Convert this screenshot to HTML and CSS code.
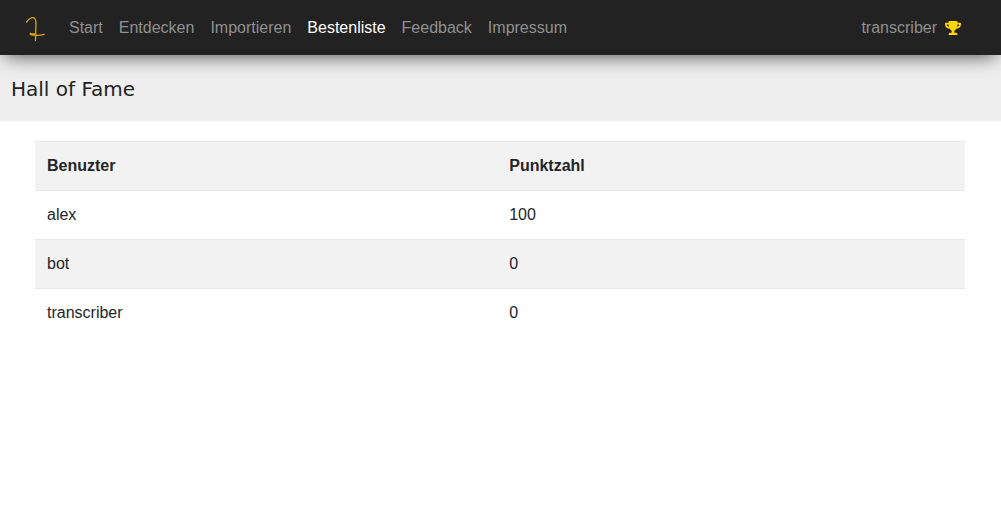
FILE: index.html
```html
<!DOCTYPE html>
<html lang="de">
<head>
<meta charset="utf-8">
<meta name="viewport" content="width=device-width, initial-scale=1">
<title>Hall of Fame</title>
<link rel="stylesheet" href="styles.css">
</head>
<body>
<nav class="navbar">
  <a class="brand" href="#" aria-label="Startseite">
    <svg class="logo" viewBox="0 0 30 30" fill="none" stroke="#d9a30f" stroke-linecap="round" stroke-linejoin="round">
      <path stroke-width="1.3" d="M6.6 9C8.5 6.400 11 4.600 13.200 4.700C15.800 5 16.100 8.500 15.900 12L15.500 27.500"/>
      <path stroke-width="1.300" d="M15.300 22.600L10.200 20.400C9.800 21.800 12 22.200 16 22.300C19 22.400 22 22 24.200 21.400"/>
      <path stroke-width="1.300" d="M10.400 20.800L15.200 21"/>
    </svg>
  </a>
  <div class="links">
    <a class="link" href="#">Start</a>
    <a class="link" href="#">Entdecken</a>
    <a class="link" href="#">Importieren</a>
    <a class="link active" href="#" aria-current="page">Bestenliste</a>
    <a class="link" href="#">Feedback</a>
    <a class="link" href="#">Impressum</a>
  </div>
  <div class="user">
    <a class="link" href="#">transcriber</a>
    <a class="award" href="#" aria-label="Bestenliste">
      <svg class="trophy" viewBox="0 0 576 512" fill="#ffd700"><path d="M552 64H448V24c0-13.300-10.700-24-24-24H152c-13.300 0-24 10.700-24 24v40H24C10.700 64 0 74.700 0 88v56c0 35.700 22.500 72.400 61.900 100.700 31.500 22.700 69.800 37.100 110 41.700C203.300 338.500 240 360 240 360v72h-48c-35.300 0-64 20.700-64 56v12c0 6.600 5.400 12 12 12h296c6.600 0 12-5.400 12-12v-12c0-35.300-28.700-56-64-56h-48v-72s36.700-21.500 68.100-73.600c40.300-4.600 78.600-19 110-41.700 39.300-28.300 61.900-65 61.900-100.700V88c0-13.300-10.700-24-24-24zM99.300 192.800C74.900 175.200 64 155.600 64 144v-16h64.200c1 32.600 5.800 61.200 12.800 86.200-15.100-5.200-29.200-12.400-41.700-21.400zM512 144c0 16.100-17.700 36.100-35.300 48.800-12.500 9-26.700 16.200-41.800 21.400 7-25 11.800-53.600 12.800-86.200H512v16z"/></svg>
    </a>
  </div>
</nav>
<header class="heading"><h1 class="title">Hall of Fame</h1></header>
<main class="content">
  <table class="scores">
    <thead><tr><th class="name" scope="col">Benuzter</th><th scope="col">Punktzahl</th></tr></thead>
    <tbody>
      <tr><td>alex</td><td>100</td></tr>
      <tr><td>bot</td><td>0</td></tr>
      <tr><td>transcriber</td><td>0</td></tr>
    </tbody>
  </table>
</main>
</body>
</html>
```
FILE: styles.css
```css
* { box-sizing: border-box; }
body {
  margin: 0;
  background: #fff;
  color: #212529;
  font: 16px/24px "Liberation Sans", Arial, sans-serif;
}
.navbar {
  position: relative;
  display: flex;
  align-items: center;
  min-height: 55px;
  padding: 0 40px 0 20px;
  background: #222;
  box-shadow: 0 5px 20px -5px rgba(0, 0, 0, 0.75);
}
.brand { display: flex; margin-right: 11px; }
.logo { width: 30px; height: 30px; }
.links { display: flex; flex: 1; }
.link {
  padding: 8px;
  color: #909090;
  text-decoration: none;
}
.active { color: #fff; }
.user { display: flex; align-items: center; }
.award { display: flex; }
.trophy { width: 16px; height: 14px; }
.heading { padding: 22px 11px 20px; background: #eee; }
.title {
  margin: 0;
  font: 20px/24px "DejaVu Sans", sans-serif;
  color: #222;
}
.content { padding: 20px 36px 20px 35px; }
.scores {
  width: 100%;
  border-collapse: separate;
  border-spacing: 0;
  table-layout: fixed;
}
.name { width: 49.7%; }
.scores th, .scores td {
  padding: 12px;
  border-top: 1px solid #e6e8ea;
  text-align: left;
}
.scores thead th,
.scores tbody tr:nth-child(even) > td { background: #f2f2f2; }
```
